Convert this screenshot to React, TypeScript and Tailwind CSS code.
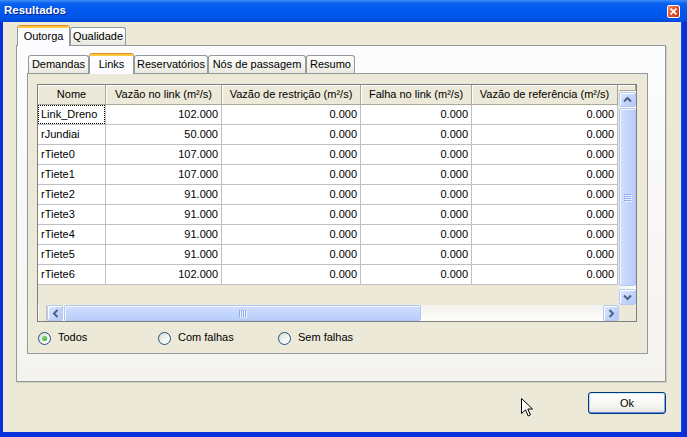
import React from 'react';

type Tab = { label: string; w: string; active?: boolean };

const outerTabs: Tab[] = [
  { label: 'Outorga', w: 'w-[53px]', active: true },
  { label: 'Qualidade', w: 'w-[56px]' },
];

const innerTabs: Tab[] = [
  { label: 'Demandas', w: 'w-[61px]' },
  { label: 'Links', w: 'w-[45px]', active: true },
  { label: 'Reservatórios', w: 'w-[74px]' },
  { label: 'Nós de passagem', w: 'w-[98px]' },
  { label: 'Resumo', w: 'w-[49px]' },
];

const columns = [
  { label: 'Nome', w: 'w-[68px]' },
  { label: 'Vazão no link (m²/s)', w: 'w-[116px]' },
  { label: 'Vazão de restrição (m²/s)', w: 'w-[139px]' },
  { label: 'Falha no link (m²/s)', w: 'w-[111px]' },
  { label: 'Vazão de referência (m²/s)', w: 'w-[146px]' },
];

const rows: [string, string][] = [
  ['Link_Dreno', '102.000'],
  ['rJundiai', '50.000'],
  ['rTiete0', '107.000'],
  ['rTiete1', '107.000'],
  ['rTiete2', '91.000'],
  ['rTiete3', '91.000'],
  ['rTiete4', '91.000'],
  ['rTiete5', '91.000'],
  ['rTiete6', '102.000'],
];

function TabStrip({ tabs }: { tabs: Tab[] }) {
  return (
    <div className="relative z-10 flex h-[20px] items-end">
      {tabs.map((t) =>
        t.active ? (
          <div
            key={t.label}
            className={`${t.w} -mb-px flex h-[21px] flex-col overflow-hidden rounded-t-[3px] border-x border-[#919B9C] bg-[#FCFCFE]`}
          >
            <div className="h-[3px] shrink-0 border-t border-[#E68B2C] bg-[#FFC83C]" />
            <div className="flex flex-1 items-center justify-center pb-[2px]">{t.label}</div>
          </div>
        ) : (
          <div
            key={t.label}
            className={`${t.w} flex h-[18px] items-center justify-center rounded-t-[3px] border border-b-0 border-[#919B9C] bg-[linear-gradient(to_bottom,#FFFFFF,#F3F2EC_60%,#E9E7DE)]`}
          >
            {t.label}
          </div>
        ),
      )}
    </div>
  );
}

function Chevron({ dir }: { dir: 'up' | 'down' | 'left' | 'right' }) {
  const rot = { up: 0, right: 90, down: 180, left: 270 }[dir];
  return (
    <svg width="9" height="9" viewBox="0 0 9 9" style={{ transform: `rotate(${rot}deg)` }}>
      <path d="M1 6.5 L4.5 3 L8 6.5" fill="none" stroke="#4D6185" strokeWidth="2" />
    </svg>
  );
}

function ScrollButton({ dir, className }: { dir: 'up' | 'down' | 'left' | 'right'; className: string }) {
  return (
    <div
      className={`${className} flex shrink-0 items-center justify-center rounded-[2px] border border-[#B6C9F3] bg-[linear-gradient(135deg,#DCE7FE,#C1D3FB_60%,#B4C9F8)] shadow-[inset_1px_1px_0_#FFFFFF]`}
    >
      <Chevron dir={dir} />
    </div>
  );
}

function Radio({ label, checked }: { label: string; checked?: boolean }) {
  return (
    <div className="flex w-[120px] items-center gap-[7px]">
      <span className="flex h-[13px] w-[13px] items-center justify-center rounded-full border border-[#1C5180] bg-[linear-gradient(135deg,#DCDCD5,#F8F8F6_70%,#FFFFFF)]">
        {checked && <span className="h-[5px] w-[5px] rounded-full bg-[radial-gradient(circle_at_35%_35%,#7FE07F,#21A121)]" />}
      </span>
      <span className="pb-px">{label}</span>
    </div>
  );
}

function Grid() {
  return (
    <div className="flex h-[238px] w-[600px] flex-col border border-[#7F7F7F] bg-[#ECE9D8]">
      <div className="flex min-h-0 flex-1">
        <div className="flex w-[580px] flex-col">
          <div className="flex h-[20px] shrink-0">
            {columns.map((c) => (
              <div
                key={c.label}
                className={`${c.w} flex items-center justify-center border-r border-b border-[#ACA899] bg-[#ECE9D8] pb-px shadow-[inset_1px_1px_0_#FFFFFF]`}
              >
                {c.label}
              </div>
            ))}
          </div>
          {rows.map(([name, v], i) => (
            <div key={name} className="flex h-[20px] shrink-0 bg-white">
              <div className="w-[68px] border-r border-b border-[#C0C0C0]">
                <div
                  className={`flex h-full items-center pb-px pl-[2px] ${i === 0 ? 'border border-dotted border-black' : 'border border-transparent'}`}
                >
                  {name}
                </div>
              </div>
              {[v, '0.000', '0.000', '0.000'].map((val, j) => (
                <div
                  key={j}
                  className={`${['w-[116px]', 'w-[139px]', 'w-[111px]', 'w-[146px]'][j]} flex items-center justify-end border-r border-b border-[#C0C0C0] pr-[3px] pb-px`}
                >
                  {val}
                </div>
              ))}
            </div>
          ))}
        </div>
        <div className="w-px" />
        <div className="flex w-[17px] flex-col">
          <div className="h-[6px] shrink-0 border-r border-b border-[#ACA899] bg-[#ECE9D8] shadow-[inset_1px_1px_0_#FFFFFF]" />
          <div className="flex flex-1 flex-col bg-[linear-gradient(to_right,#F3F1EC,#FEFEFB)] pt-px">
            <ScrollButton dir="up" className="h-[15px] w-[17px]" />
            <div className="flex flex-1 flex-col pt-px pb-[3px]">
              <div className="flex flex-1 items-center justify-center rounded-[2px] border border-[#B1C6F5] bg-[linear-gradient(to_right,#D3E0FD,#C4D6FC_50%,#B9CDFA)] shadow-[inset_1px_1px_0_#F2F6FF]">
                <div className="flex flex-col gap-px">
                  {[0, 1, 2, 3].map((k) => (
                    <span key={k} className="h-px w-[7px] bg-[#8CABF0] shadow-[1px_1px_0_#EEF3FF]" />
                  ))}
                </div>
              </div>
            </div>
            <ScrollButton dir="down" className="h-[16px] w-[17px]" />
          </div>
        </div>
      </div>
      <div className="flex h-[16px] shrink-0">
        <div className="w-[9px] border-r border-[#C8C5B5] bg-[#ECE9D8] shadow-[inset_1px_0_0_#FFFFFF]" />
        <ScrollButton dir="left" className="h-[16px] w-[16px]" />
        <div className="flex flex-1 bg-[linear-gradient(to_bottom,#F3F1EC,#FEFEFB)] pl-px">
          <div className="flex w-[357px] items-center justify-center rounded-[2px] border border-[#B1C6F5] bg-[linear-gradient(to_bottom,#D3E0FD,#C4D6FC_50%,#B9CDFA)] shadow-[inset_1px_1px_0_#F2F6FF]">
            <div className="flex gap-px">
              {[0, 1, 2, 3].map((k) => (
                <span key={k} className="h-[7px] w-px bg-[#8CABF0] shadow-[1px_1px_0_#EEF3FF]" />
              ))}
            </div>
          </div>
        </div>
        <ScrollButton dir="right" className="h-[16px] w-[16px]" />
        <div className="w-[17px] bg-[#ECE9D8]" />
      </div>
    </div>
  );
}

export default function App() {
  return (
    <div className="relative flex h-[437px] w-[687px] flex-col bg-[#0831D9] font-['Liberation_Sans',Arial,sans-serif] text-[11px] text-black">
      {/* title bar */}
      <div className="flex h-[22px] shrink-0 items-center bg-[linear-gradient(to_bottom,#3D8FF9_0%,#0A62F0_15%,#0058EE_45%,#0055E8_80%,#0048D8_100%)] pl-[4px] pr-[7px]">
        <span className="flex-1 pb-px text-[11.5px] font-bold text-white [text-shadow:1px_1px_0_#0A1E8C]">Resultados</span>
        <div className="flex h-[13px] w-[13px] items-center justify-center rounded-[2px] border border-white bg-[linear-gradient(135deg,#F08A6A,#E0502A_50%,#C8391A)]">
          <svg width="7" height="7" viewBox="0 0 7 7">
            <path d="M0.5 0.5 L6.5 6.5 M6.5 0.5 L0.5 6.5" stroke="#FFFFFF" strokeWidth="1.6" />
          </svg>
        </div>
      </div>

      {/* client */}
      <div className="mb-[5px] ml-[3px] mr-[5px] flex flex-1 flex-col border-r border-[#0055E5] bg-[#ECE9D8] pl-[13px] pt-[3px]">
        <div className="pl-px">
          <TabStrip tabs={outerTabs} />
        </div>
        <div className="flex h-[337px] w-[650px] flex-col border border-[#919B9C] bg-[linear-gradient(to_bottom,#FCFCFE,#F4F3EE)] pl-[10px] pt-[7px] shadow-[1px_1px_0_#D0CEBF]">
          <div className="pl-px">
            <TabStrip tabs={innerTabs} />
          </div>
          <div className="flex h-[281px] w-[621px] flex-col border border-[#919B9C] bg-[#ECE9D8] pl-[9px] pt-[10px]">
            <Grid />
            <div className="mt-[9px] flex h-[14px] items-center pl-px">
              <Radio label="Todos" checked />
              <Radio label="Com falhas" />
              <Radio label="Sem falhas" />
            </div>
          </div>
        </div>
        <div className="mt-[10px] flex justify-end pr-[15px]">
          <button className="flex h-[22px] w-[78px] items-center justify-center rounded-[3px] border border-[#003C74] bg-[linear-gradient(to_bottom,#FFFFFF,#F4F3EE_70%,#E3E2DA)] shadow-[inset_0_1px_0_#CEE7FF,inset_0_-1px_0_#6982EE,inset_1px_0_0_#B8D3F8,inset_-1px_0_0_#8AA6F0]">
            Ok
          </button>
        </div>
      </div>

      {/* mouse pointer */}
      <svg className="absolute left-[521px] top-[398px]" width="13" height="20" viewBox="0 0 13 20">
        <path d="M0.5 0.5 L0.5 15.5 L4.5 11.8 L7.2 18 L9.4 17 L6.8 11 L11.5 11 Z" fill="#FFFFFF" stroke="#000000" strokeWidth="1" />
      </svg>
    </div>
  );
}
